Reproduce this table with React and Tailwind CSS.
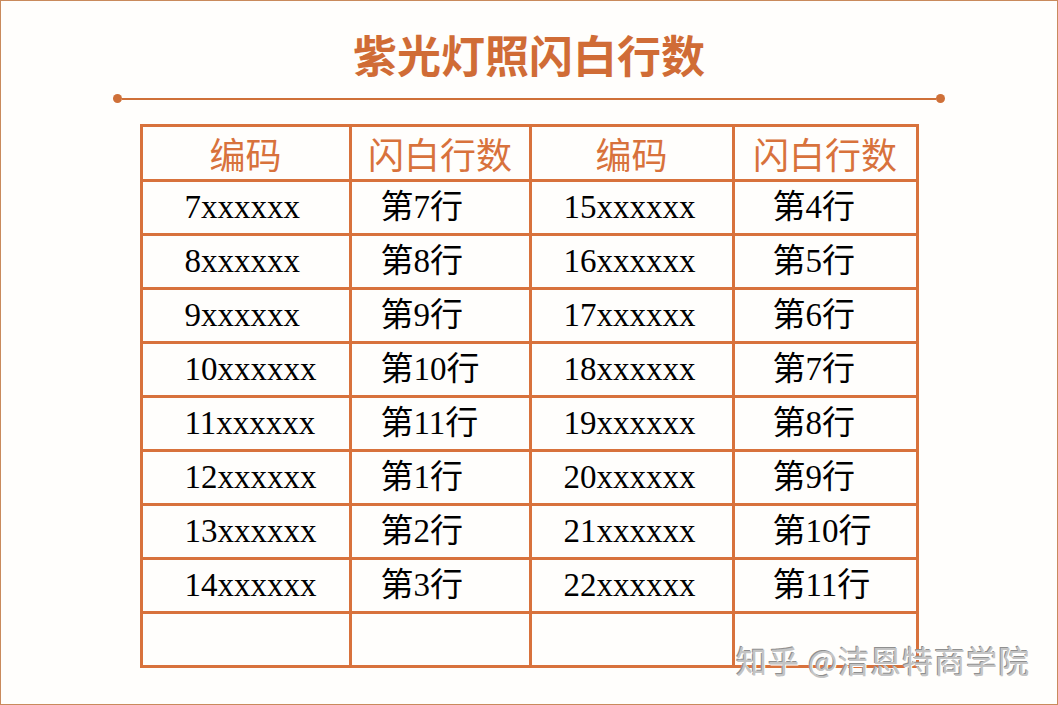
import React from 'react';

const rows = [
  ['7xxxxxx', '第7行', '15xxxxxx', '第4行'],
  ['8xxxxxx', '第8行', '16xxxxxx', '第5行'],
  ['9xxxxxx', '第9行', '17xxxxxx', '第6行'],
  ['10xxxxxx', '第10行', '18xxxxxx', '第7行'],
  ['11xxxxxx', '第11行', '19xxxxxx', '第8行'],
  ['12xxxxxx', '第1行', '20xxxxxx', '第9行'],
  ['13xxxxxx', '第2行', '21xxxxxx', '第10行'],
  ['14xxxxxx', '第3行', '22xxxxxx', '第11行'],
  ['', '', '', ''],
];

const pads = ['pl-[42px]', 'pl-[29px]', 'pl-[32px]', 'pl-[38px]'];

const App = () => {
  return (
    <div className="relative w-[1058px] h-[705px] bg-[#fffefc] border border-[#c98a5c] overflow-hidden">
      <h1
        className="pt-[23px] text-center text-[44px] leading-[60px] font-bold text-[#d06c36]"
        style={{ fontFamily: '"Noto Sans CJK SC", sans-serif' }}
      >
        紫光灯照闪白行数
      </h1>

      {/* divider with dots */}
      <div className="mt-[10px] mx-auto w-[832px] flex items-center">
        <div className="w-[9px] h-[9px] rounded-full bg-[#cf7038]" />
        <div className="flex-1 h-[2px] bg-[#cf7038]" />
        <div className="w-[9px] h-[9px] rounded-full bg-[#cf7038]" />
      </div>

      <div className="mt-[21px] mx-auto w-[779px] grid grid-cols-[209px_180px_203px_184px] border-t-[3px] border-l-[3px] border-[#d8723c]">
        {['编码', '闪白行数', '编码', '闪白行数'].map((h, i) => (
          <div
            key={i}
            className="h-[55px] border-r-[3px] border-b-[3px] border-[#d8723c] flex items-center justify-center text-[36px] text-[#d8723c]"
            style={{ fontFamily: '"Noto Sans CJK SC", sans-serif' }}
          >
            {h}
          </div>
        ))}
        {rows.map((r, ri) =>
          r.map((c, ci) => (
            <div
              key={ri + '-' + ci}
              className={`h-[54px] border-r-[3px] border-b-[3px] border-[#d8723c] flex items-center text-[33px] text-black ${pads[ci]}`}
              style={{ fontFamily: '"Liberation Serif", "Noto Sans CJK SC", serif' }}
            >
              {c}
            </div>
          ))
        )}
      </div>

      {/* watermark */}
      <div
        className="absolute left-[735px] top-[636px] text-[31px] text-[#c4c4c4] tracking-[1px]"
        style={{ fontFamily: '"Noto Sans CJK SC", sans-serif', textShadow: '1px 1px 0 #ffffff, -1px -1px 0 #8f8f8f' }}
      >
        知乎 @洁恩特商学院
      </div>
    </div>
  );
};

export default App;
